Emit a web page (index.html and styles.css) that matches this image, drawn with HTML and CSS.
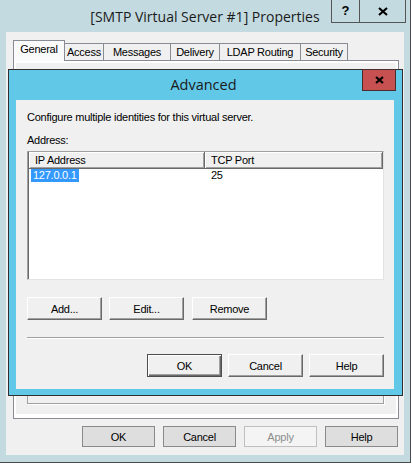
FILE: index.html
```html
<!DOCTYPE html>
<html>
<head>
<meta charset="utf-8">
<link rel="stylesheet" href="styles.css">
</head>
<body>
<div class="window">
  <div class="titlebar">[SMTP Virtual Server #1] Properties</div>
  <div class="caps">
    <div class="cap cap-help">?</div>
    <div class="cap cap-close">
      <svg width="10" height="9" viewBox="0 0 10 9"><path d="M1 1 L9 8 M9 1 L1 8" stroke="#000" stroke-width="2.2" fill="none"/></svg>
    </div>
  </div>
  <div class="client">
    <div class="tabs">
      <div class="tab active t-general">General</div>
      <div class="tab t-access">Access</div>
      <div class="tab t-messages">Messages</div>
      <div class="tab t-delivery">Delivery</div>
      <div class="tab t-ldap">LDAP Routing</div>
      <div class="tab t-security">Security</div>
    </div>
    <div class="panel"><div class="group"></div></div>
    <div class="actions">
      <button class="wbtn">OK</button>
      <button class="wbtn">Cancel</button>
      <button class="wbtn disabled">Apply</button>
      <button class="wbtn">Help</button>
    </div>
  </div>

  <div class="dialog">
    <div class="dtitle">Advanced</div>
    <div class="dclose">
      <svg width="9" height="8" viewBox="0 0 9 8"><path d="M1 1 L8 7 M8 1 L1 7" stroke="#000" stroke-width="2.2" fill="none"/></svg>
    </div>
    <div class="dclient">
      <p class="intro">Configure multiple identities for this virtual server.</p>
      <div class="label">Address:</div>
      <div class="list">
        <div class="lhead">
          <div class="hcol c1">IP Address</div>
          <div class="hcol c2">TCP Port</div>
        </div>
        <div class="lrow">
          <div class="cell c1"><span class="sel">127.0.0.1</span></div>
          <div class="cell c2">25</div>
        </div>
      </div>
      <div class="btnrow">
        <button class="cbtn">Add...</button>
        <button class="cbtn">Edit...</button>
        <button class="cbtn remove">Remove</button>
      </div>
      <div class="sep"></div>
      <div class="btnrow end">
        <button class="cbtn default">OK</button>
        <button class="cbtn">Cancel</button>
        <button class="cbtn">Help</button>
      </div>
    </div>
  </div>
</div>
</body>
</html>
```

FILE: styles.css
```css
* { box-sizing: border-box; }

body {
  margin: 0;
  background: #ffffff;
  font-family: "Liberation Sans", Arial, sans-serif;
  font-size: 11px;
  letter-spacing: -0.25px;
  color: #000;
}

.window {
  position: relative;
  width: 411px;
  height: 463px;
  background: #c4dae1;
  border-right: 1px solid #4a4a4a;
  border-bottom: 1px solid #4a4a4a;
}

.titlebar {
  height: 32px;
  line-height: 33px;
  text-align: center;
  font-family: "Open Sans", "Noto Sans", sans-serif;
  font-size: 14px;
  letter-spacing: 0;
  color: #1a1a1a;
}

.caps {
  position: absolute;
  top: 0;
  right: 4px;
  display: flex;
}

.cap {
  height: 23px;
  border: 1px solid #555;
  border-top: 0;
  display: flex;
  align-items: center;
  justify-content: center;
}

.cap-help {
  width: 29px;
  font-weight: bold;
  font-size: 13px;
  letter-spacing: 0;
  padding-bottom: 1px;
}

.cap-close {
  width: 47px;
  margin-left: -1px;
}

.client {
  margin: 0 6px;
  height: 423px;
  background: #f0f0f0;
  padding: 8px 5px 0 7px;
}

.tabs {
  display: flex;
  align-items: flex-end;
  height: 20px;
}

.tab {
  height: 17px;
  border: 1px solid #898c95;
  border-bottom: 0;
  background: #f0f0f0;
  margin-left: -1px;
  text-align: center;
  line-height: 16px;
  white-space: nowrap;
}

.tab.active {
  height: 21px;
  margin-left: 0;
  margin-bottom: -1px;
  position: relative;
  z-index: 1;
  background: #fafafa;
  line-height: 16px;
}

.t-general { width: 52px; }
.t-access { width: 40px; }
.t-messages { width: 68px; }
.t-delivery { width: 50px; }
.t-ldap { width: 82px; }
.t-security { width: 48px; }

.panel {
  height: 359px;
  border: 1px solid #898c95;
  background: #f0f0f0;
  box-shadow: inset 2px 2px 0 #fff, inset -2px -4px 0 #fff;
  padding: 14px 14px 14px 13px;
  display: flex;
}

.group {
  flex: 1;
  border: 1px solid #a0a0a0;
  box-shadow: 1px 1px 0 #fff;
}

.actions {
  display: flex;
  justify-content: flex-end;
  gap: 8px;
  margin-top: 7px;
  padding-right: 1px;
}

.wbtn {
  width: 73px;
  height: 21px;
  border: 1px solid #8a8a8a;
  background: #dedede;
  font: inherit;
  letter-spacing: inherit;
  color: #000;
  padding: 0;
}

.wbtn.disabled {
  border-color: #bfbfbf;
  background: #f4f4f4;
  color: #8d8d8d;
}

.dialog {
  position: absolute;
  left: 8px;
  top: 69px;
  width: 395px;
  height: 327px;
  border: 1px solid #2f2f2f;
  background: #62c8e8;
  padding: 0 8px 6px 7px;
  display: flex;
  flex-direction: column;
}

.dtitle {
  height: 30px;
  line-height: 30px;
  text-align: center;
  font-family: "Open Sans", "Noto Sans", sans-serif;
  font-size: 14.5px;
  letter-spacing: 0;
  color: #1a1a1a;
  padding-right: 3px;
}

.dclose {
  position: absolute;
  top: -1px;
  right: 6px;
  width: 34px;
  height: 22px;
  background: #c75050;
  border: 1px solid #4a2c2c;
  display: flex;
  align-items: center;
  justify-content: center;
}

.dclient {
  flex: 1;
  background: #f0f0f0;
  padding: 11px 10px 0 11px;
}

.intro {
  margin: 0;
  line-height: 13px;
}

.label {
  margin-top: 10px;
  line-height: 13px;
}

.list {
  margin-top: 4px;
  height: 129px;
  background: #fff;
  border: 1px solid;
  border-color: #a0a0a0 #e3e3e3 #e3e3e3 #a0a0a0;
  box-shadow: inset 1px 1px 0 #696969;
  padding: 0 0 0 1px;
}

.lhead {
  display: flex;
  height: 17px;
}

.hcol {
  background: #f0f0f0;
  border-right: 1px solid #696969;
  border-bottom: 1px solid #696969;
  box-shadow: inset 1px 1px 0 #fff, inset -1px -1px 0 #a0a0a0;
  padding-left: 6px;
  line-height: 16px;
}

.c1 { width: 176px; }
.c2 { flex: 1; }

.lrow {
  display: flex;
  height: 13px;
  line-height: 13px;
}

.cell.c1 { padding-left: 2px; }
.cell.c2 { padding-left: 6px; }

.sel {
  display: inline-block;
  height: 13px;
  background: #3399ff;
  color: #fff;
  padding: 0 2px;
}

.btnrow {
  display: flex;
  gap: 7px;
  margin-top: 17px;
}

.btnrow.end {
  justify-content: flex-end;
  gap: 6px;
  margin-top: 15px;
}

.cbtn {
  width: 75px;
  height: 23px;
  background: #f0f0f0;
  border: 1px solid;
  border-color: #fff #696969 #696969 #fff;
  box-shadow: inset -1px -1px 0 #a0a0a0;
  font: inherit;
  letter-spacing: inherit;
  color: #000;
  padding: 0;
}

.cbtn.remove { margin-left: 1px; }

.cbtn.default {
  border-color: #4d4d4d;
  box-shadow: inset 1px 1px 0 #fff, inset -1px -1px 0 #696969, inset -2px -2px 0 #a0a0a0;
}

.sep {
  margin-top: 17px;
  border-top: 1px solid #a0a0a0;
  border-bottom: 1px solid #fff;
}
```
